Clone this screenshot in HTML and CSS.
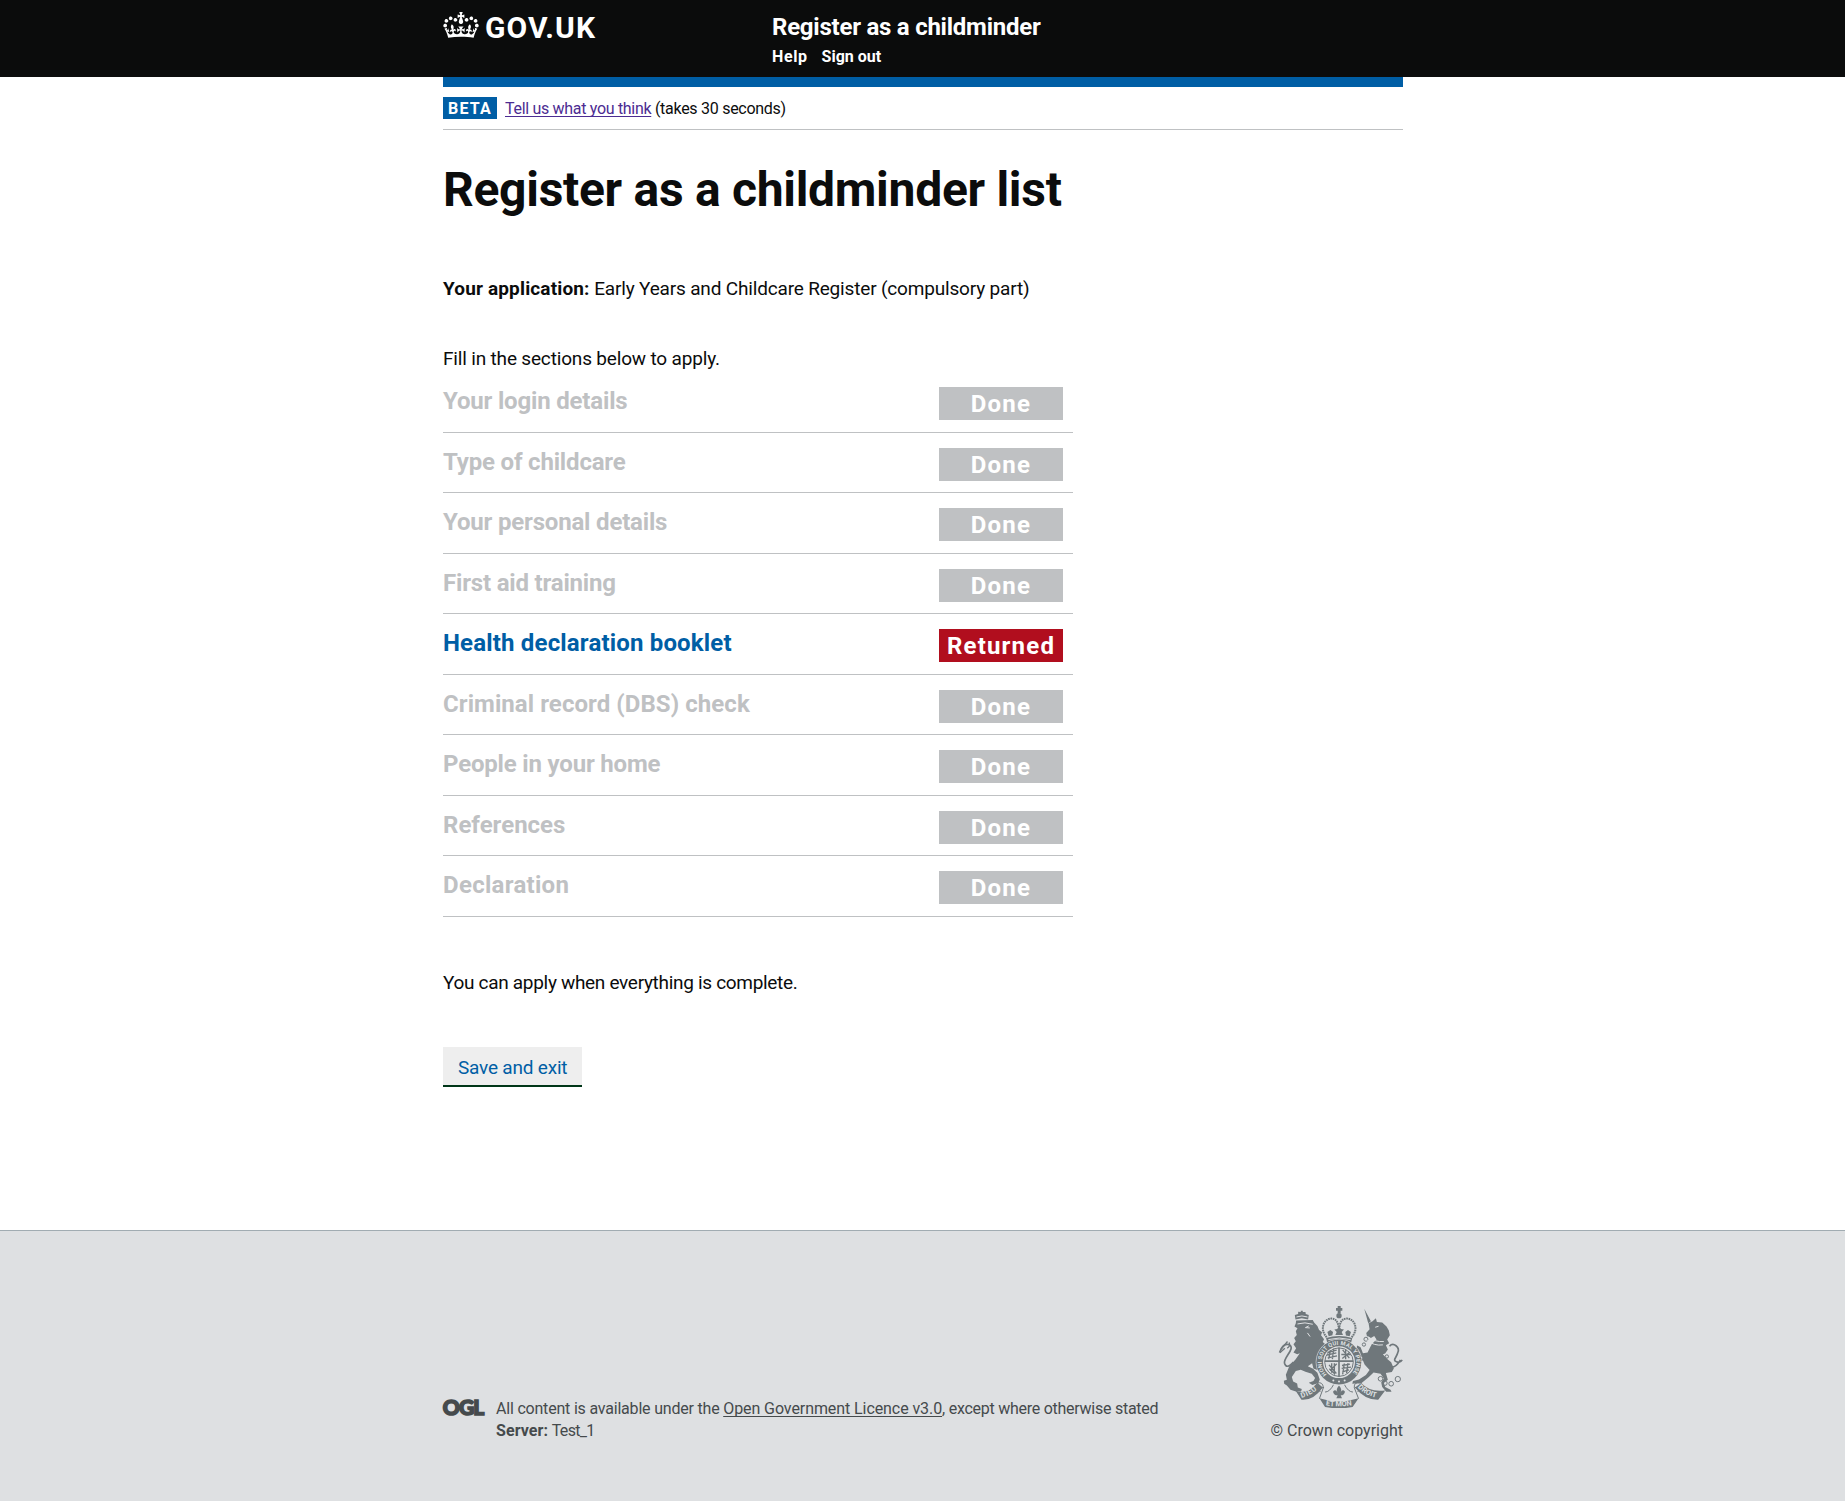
FILE: index.html
```html
<!DOCTYPE html>
<html lang="en">
<head>
<meta charset="utf-8">
<title>Register as a childminder list</title>
<link rel="stylesheet" href="styles.css">
</head>
<body>
<header class="site-header">
  <div class="wrap header-inner">
    <a class="logo" href="#">
      <svg class="logo-crown" viewBox="0 0 132 97" aria-hidden="true"><path fill="currentColor" d="M25 30.2c3.5 1.5 7.7-.2 9.1-3.7 1.5-3.6-.2-7.8-3.9-9.2-3.6-1.4-7.6.3-9.1 3.9-1.4 3.5.3 7.5 3.9 9zM9 39.5c3.6 1.5 7.8-.2 9.2-3.7 1.5-3.6-.2-7.8-3.9-9.1-3.6-1.5-7.6.2-9.1 3.8-1.4 3.5.3 7.5 3.8 9zM4.4 57.2c3.5 1.5 7.7-.2 9.1-3.8 1.5-3.6-.2-7.7-3.9-9.1-3.5-1.5-7.6.3-9.1 3.8-1.4 3.5.3 7.6 3.9 9.1zm38.3-21.4c3.5 1.5 7.7-.2 9.1-3.8 1.5-3.6-.2-7.7-3.9-9.1-3.6-1.5-7.6.3-9.1 3.8-1.3 3.6.4 7.7 3.9 9.1zm64.4-5.6c-3.6 1.5-7.8-.2-9.1-3.7-1.5-3.6.2-7.8 3.8-9.2 3.6-1.4 7.7.3 9.2 3.9 1.3 3.5-.4 7.5-3.9 9zm15.9 9.3c-3.6 1.5-7.7-.2-9.1-3.7-1.5-3.6.2-7.8 3.7-9.1 3.6-1.5 7.7.2 9.2 3.8 1.5 3.5-.3 7.5-3.8 9zm4.7 17.7c-3.6 1.5-7.8-.2-9.2-3.8-1.5-3.6.2-7.7 3.9-9.1 3.6-1.5 7.7.3 9.2 3.8 1.3 3.5-.4 7.6-3.9 9.1zM89.3 35.8c-3.6 1.5-7.8-.2-9.2-3.8-1.4-3.6.2-7.7 3.9-9.1 3.6-1.5 7.7.3 9.2 3.8 1.4 3.6-.3 7.7-3.9 9.1zM69.7 17.7l8.9 4.7V9.3l-8.9 2.8c-.2-.3-.5-.6-.9-.9L72.4 0H59.6l3.5 11.2c-.3.3-.6.5-.9.9l-8.8-2.8v13.1l8.8-4.7c.3.3.6.7.9.9l-5 15.4v.1c-.2.8-.4 1.6-.4 2.4 0 4.1 3.1 7.5 7 8.1h.2c.3 0 .7.1 1 .1.4 0 .7 0 1-.1h.2c4-.6 7.1-4.1 7.1-8.1 0-.8-.1-1.7-.4-2.4V34l-5.1-15.4c.4-.2.7-.6 1-.9zM66 92.8c16.9 0 32.8 1.1 47.1 3.2 4-16.9 8.9-26.7 14-33.5l-9.6-3.4c1 4.9 1.1 7.2 0 10.2-1.5-1.4-3-4.3-4.2-8.7L108.6 76c2.8-2 5-3.2 7.5-3.3-4.4 9.4-10 11.9-13.6 11.2-4.3-.8-6.3-4.6-5.6-7.9 1-4.7 5.7-5.9 8-.5 4.3-8.7-3-11.4-7.6-8.8 7.1-7.2 7.9-13.5 2.1-21.1-8 6.1-8.1 12.3-4.5 20.8-4.7-5.4-12.1-2.5-9.5 6.2 3.4-5.2 7.9-2 7.2 3.1-.6 4.3-6.4 7.8-13.5 7.2-10.3-.9-10.9-8-11.2-13.8 2.5-.5 7.1 1.8 11 7.3L80.2 60c-4.1 4.4-8 5.3-12.3 5.4 1.4-4.4 8-11.6 8-11.6H55.5s6.4 7.2 7.9 11.6c-4.2-.1-8-1-12.3-5.4l1.4 16.4c3.9-5.5 8.5-7.7 10.9-7.3-.3 5.8-.9 12.8-11.1 13.8-7.2.6-12.9-2.9-13.5-7.2-.7-5 3.8-8.3 7.1-3.1 2.7-8.7-4.6-11.6-9.4-6.2 3.7-8.5 3.6-14.7-4.6-20.8-5.8 7.6-5 13.9 2.2 21.1-4.7-2.6-11.9.1-7.7 8.8 2.3-5.5 7.1-4.2 8.1.5.7 3.3-1.3 7.1-5.7 7.9-3.5.7-9-1.8-13.5-11.2 2.5.1 4.7 1.3 7.5 3.3l-4.7-15.4c-1.2 4.4-2.7 7.2-4.3 8.7-1.1-3-.9-5.3 0-10.2l-9.5 3.4c5 6.9 9.9 16.7 14 33.5 14.8-2.1 30.8-3.2 47.7-3.2z"/></svg>
      <span class="logo-text">GOV.UK</span>
    </a>
    <div class="header-nav">
      <a class="service-name" href="#">Register as a childminder</a>
      <nav class="nav-links"><a class="nav-help" href="#">Help</a><a href="#">Sign out</a></nav>
    </div>
  </div>
</header>

<main class="wrap">
  <div class="blue-bar"></div>
  <div class="phase-banner">
    <strong class="phase-tag">BETA</strong>
    <span class="phase-text"><a class="feedback" href="#">Tell us what you think</a><span class="feedback-note"> (takes 30 seconds)</span></span>
  </div>

  <h1>Register as a childminder list</h1>
  <p class="application"><strong>Your application:</strong> Early Years and Childcare Register (compulsory part)</p>
  <p class="intro">Fill in the sections below to apply.</p>

  <ul class="tasks">
    <li><span class="task">Your login details</span><span class="status">Done</span></li>
    <li><span class="task">Type of childcare</span><span class="status">Done</span></li>
    <li><span class="task">Your personal details</span><span class="status">Done</span></li>
    <li><span class="task">First aid training</span><span class="status">Done</span></li>
    <li><a class="task task-active" href="#">Health declaration booklet</a><span class="status status-returned">Returned</span></li>
    <li><span class="task task-wide">Criminal record (DBS) check</span><span class="status">Done</span></li>
    <li><span class="task">People in your home</span><span class="status">Done</span></li>
    <li><span class="task task-short">References</span><span class="status">Done</span></li>
    <li><span class="task task-wider">Declaration</span><span class="status">Done</span></li>
  </ul>

  <p class="outro">You can apply when everything is complete.</p>
  <a class="button" href="#">Save and exit</a>
</main>

<footer class="site-footer">
  <div class="wrap footer-inner">
    <svg class="ogl" viewBox="0 0 41 18" aria-label="OGL"><text x="-.2" y="16.4" textLength="41.5" lengthAdjust="spacing">OGL</text></svg>
    <div class="licence">
      <p>All content is available under the <a href="#">Open Government Licence v3.0</a><span class="licence-end">, except where otherwise stated</span></p>
      <p><strong>Server:</strong> <span class="server">Test_1</span></p>
    </div>
    <a class="copyright" href="#">
      <svg class="crest" viewBox="24 18 375 307" aria-hidden="true">
        <defs>
          <path id="garter" d="M170 224A52.3 52.3 0 1 1 244 224"/>
          <path id="left-band" d="M94 295Q122 288 145 266"/>
          <path id="mid-band" d="M167 317Q207 323 247 317"/>
          <path id="right-band" d="M263 263Q290 290 324 294"/>
        </defs>
        <g class="ink">
          <!-- lion -->
          <path d="M77 70L78 62 128 60 132 68 142 78 147 90 156 97 153 106 162 118 158 126 165 132 178 130 182 140 166 150 158 170 160 190 155 202 146 212 130 206 126 190 113 199 129 207 142 219 149 239 145 250 127 256 116 249 130 244 135 235 125 222 106 216 92 210 77 214 65 232 69 245 81 251 83 263 95 268 93 275 77 275 61 270 50 257 42 252 41 243 50 240 47 225 57 200 76 179 89 160 81 163 70 158 78 145 70 133 77 124 72 114 80 105 77 94 82 85 73 80Z"/>
          <path d="M76 59L74 45 84 42 84 35 92 36 92 32 98 32 98 36 106 36 107 42 116 45 114 59 95 55Z"/>
          <!-- unicorn -->
          <path d="M283 26L303 64 295 70ZM296 70L308 64 318 55 321 66 337 68 350 80 357 92 360 106 352 119 358 130 348 136 354 149 346 161 339 163 353 178 364 187 372 206 366 217 348 220 354 240 342 250 346 262 362 270 365 276 349 276 337 262 334 248 342 236 332 222 311 218 297 232 275 250 247 252 249 244 267 239 288 226 299 211 284 194 279 182 265 186 257 179 262 173 279 175 268 166 270 158 259 146 262 137 272 142 279 160 293 158 300 144 306 132 320 119 313 108 303 114 291 108 289 99 299 88Z"/>
          <!-- centre crown -->
          <path d="M168 114Q207 103 247 114L242 134Q207 124 173 134Z"/>
          <path d="M203 18H212V24H217V32H212V40H203V32H198V24H203Z"/>
          <circle cx="207" cy="47" r="8"/>
          <path d="M176 109L172 96 181 90 189 96 187 106ZM196 105L200 96 193 89 202 87 207 79 213 87 222 89 215 96 219 105ZM228 107L226 96 234 90 243 96 239 109Z"/>
          <!-- scroll -->
          <path d="M76 272Q109 288 142 249L158 263Q130 303 94 300ZM255 263L274 250Q300 279 346 272L325 300Q285 301 255 263ZM148 296Q206 315 266 296L248 322Q207 330 165 322Z"/>
          <!-- fleur-de-lis -->
          <path d="M207 257Q218 269 211 279Q218 266 225 276Q223 287 212 287L216 296H199L203 287Q191 287 189 276Q196 266 203 279Q196 269 207 257Z"/>
        </g>
        <g class="line">
          <path d="M28 158Q38 129 55 134C80 143 39 173 43 190Q49 210 70 187" stroke-width="5"/>
          <path d="M31 150L52 125M29 159L44 145M51 145Q61 140 57 128" stroke-width="4"/>
          <path d="M359 139C371 125 391 143 384 158C380 174 367 181 380 186Q391 191 397 180M357 200Q375 209 392 180" stroke-width="5"/>
          <path d="M170 112C146 86 163 53 187 56Q204 57 207 89Q210 57 228 56C252 53 269 86 245 112" stroke-width="6" stroke-dasharray="5 2"/>
          <circle cx="332" cy="237" r="7"/><circle cx="345" cy="250" r="7"/><circle cx="364" cy="252" r="7"/><circle cx="384" cy="238" r="8"/><circle cx="351" cy="170" r="5"/><circle cx="288" cy="118" r="6"/><circle cx="282" cy="134" r="5"/>
          <path d="M142 250Q158 245 160 264L148 297M272 250Q251 245 253 264L266 297M150 277Q145 265 162 263M264 277Q269 265 254 263" stroke-width="3"/>
          <path d="M172 239Q204 266 247 236M191 254Q179 277 165 277M223 254Q235 277 249 277" stroke-width="3"/>
        </g>
        <g class="paper-line">
          <path d="M116 78L106 83 119 84M112 99L120 110M82 72Q104 65 128 73M79 51Q95 45 112 51M175 119Q207 110 242 119M295 111Q314 127 342 125M290 121Q313 139 339 135M316 82L326 79"/>
          <circle cx="207" cy="187" r="69" stroke-width="2"/>
        </g>
        <circle class="ink" cx="207" cy="187" r="67"/>
        <circle class="paper" cx="207" cy="187" r="48"/>
        <g class="line">
          <circle cx="207" cy="187" r="43" stroke-width="3"/>
          <path d="M207 144V230M164 184H250" stroke-width="5"/>
          <path d="M172 158L200 151M170 166L199 159M173 174L201 168M181 151L176 178M191 147L187 178M218 150L238 175M239 157L217 176M214 164H243M227 148V178M177 195L199 221M178 207L194 222M185 190V219M193 190V225M200 192L180 213M216 197L240 193M215 206L243 202M217 216L237 210M223 191L218 224M234 190L230 220" stroke-width="4"/>
        </g>
        <g class="paper">
          <circle cx="190" cy="242" r="3"/><circle cx="207" cy="245" r="3"/><circle cx="224" cy="242" r="3"/>
        </g>
        <text class="motto" font-size="17"><textPath href="#garter" textLength="240">HONI SOIT QUI MAL Y PENSE</textPath></text>
        <text class="motto" font-size="22"><textPath href="#left-band" textLength="54">DIEU</textPath></text>
        <text class="motto" font-size="22"><textPath href="#mid-band" textLength="79">ET MON</textPath></text>
        <text class="motto" font-size="22"><textPath href="#right-band" textLength="64">DROIT</textPath></text>
      </svg>
      <span>© Crown copyright</span>
    </a>
  </div>
</footer>
</body>
</html>
```
FILE: styles.css
```css
* { box-sizing: border-box; }

body {
  margin: 0;
  background: #fff;
  color: #0b0c0c;
  font-family: Roboto, "Liberation Sans", sans-serif;
  font-size: 19px;
  line-height: 25px;
}

h1, p, ul { margin: 0; padding: 0; }
ul { list-style: none; }

.wrap { width: 960px; margin-left: 443px; }

.site-header { height: 77px; background: #0b0c0c; }
.header-inner { display: flex; }
.logo {
  display: flex;
  width: 329px;
  padding-top: 12px;
  color: #fff;
  text-decoration: none;
}
.logo-crown { width: 36px; height: 26px; }
.logo-text {
  margin: 1px 0 0 6px;
  font-size: 30px;
  font-weight: 700;
  line-height: 30px;
  letter-spacing: 1.05px;
}
.header-nav { padding-top: 12px; }
.service-name, .nav-links a { color: #fff; font-weight: 700; text-decoration: none; }
.service-name {
  display: block;
  font-size: 24px;
  line-height: 30px;
  letter-spacing: -.24px;
}
.nav-links {
  display: flex;
  gap: 14px;
  margin-top: 5px;
  font-size: 16px;
  line-height: 20px;
}
.nav-links .nav-help { letter-spacing: .6px; }

.blue-bar { height: 10px; background: #005ea5; }
.phase-banner {
  display: flex;
  gap: 8px;
  height: 43px;
  padding-top: 10px;
  border-bottom: 1px solid #bfc1c3;
  font-size: 16px;
  line-height: 22px;
}
.phase-tag {
  width: 54px;
  height: 22px;
  padding-left: 5px;
  background: #005ea5;
  color: #fff;
  line-height: 24px;
  letter-spacing: 1.2px;
}
.phase-text { padding-top: 1px; }
.feedback {
  color: #4c2c92;
  letter-spacing: -.31px;
  text-decoration: underline 1px;
  text-decoration-skip-ink: none;
  text-underline-offset: 2px;
}
.feedback-note { letter-spacing: -.28px; }

h1 {
  margin-top: 35px;
  font-size: 48px;
  font-weight: 700;
  line-height: 50px;
  letter-spacing: -.29px;
}
.application { margin-top: 61px; letter-spacing: -.17px; }
.application strong { letter-spacing: .15px; }
.intro { margin-top: 45px; letter-spacing: -.17px; }

.tasks { width: 630px; margin-top: 1.25px; }
.tasks li {
  display: flex;
  justify-content: space-between;
  height: 60.5px;
  padding: 14.75px 10px 0 0;
  border-bottom: 1px solid #bfc1c3;
}
.task {
  padding-top: 2px;
  color: #bfc1c3;
  font-size: 24px;
  font-weight: 700;
  letter-spacing: -.18px;
  text-decoration: none;
}
.task-active { color: #005ea5; letter-spacing: .17px; }
.task-wide { letter-spacing: .07px; }
.task-wider { letter-spacing: .29px; }
.task-short { letter-spacing: 0; }
.status {
  width: 124px;
  height: 33px;
  background: #bfc1c3;
  color: #fff;
  font-size: 24px;
  font-weight: 700;
  line-height: 34px;
  letter-spacing: 1.2px;
  text-align: center;
}
.status-returned { background: #b10e1e; }

.outro { margin-top: 53.25px; letter-spacing: -.31px; }
.button {
  display: block;
  width: 139px;
  height: 40px;
  margin-top: 52px;
  padding: 8px 0 0 15px;
  border-bottom: 2px solid #003618;
  background: #eee;
  color: #005ea5;
  letter-spacing: -.2px;
  text-decoration: none;
}

.site-footer {
  height: 271px;
  margin-top: 143px;
  border-top: 1px solid #a1acb2;
  background: #dee0e2;
  color: #454a4c;
  font-size: 16px;
  line-height: 22px;
}
.footer-inner { display: flex; padding-top: 75px; }
.ogl { width: 41px; height: 18px; margin-top: 92.5px; overflow: visible; }
.ogl text {
  fill: #454a4c;
  stroke: #454a4c;
  stroke-width: 1.6;
  font: 900 21px Lato, sans-serif;
}
.licence { margin: 92px 0 0 12px; letter-spacing: -.2px; }
.licence a {
  color: #454a4c;
  letter-spacing: -.08px;
  text-decoration: underline 1px;
  text-decoration-skip-ink: none;
  text-underline-offset: 2px;
}
.licence-end { letter-spacing: -.26px; }
.licence strong { letter-spacing: .07px; }
.server { letter-spacing: -.7px; }
.copyright {
  display: flex;
  flex-direction: column;
  align-items: flex-end;
  margin-left: auto;
  color: #454a4c;
  text-decoration: none;
}
.crest { width: 125px; height: 102px; margin-bottom: 12px; }
.ink { fill: #6f777b; }
.paper { fill: #dee0e2; }
.line { fill: none; stroke: #6f777b; stroke-width: 3; }
.paper-line { fill: none; stroke: #dee0e2; stroke-width: 3; }
.motto { fill: #dee0e2; font-family: Roboto, sans-serif; font-weight: 700; }
```
